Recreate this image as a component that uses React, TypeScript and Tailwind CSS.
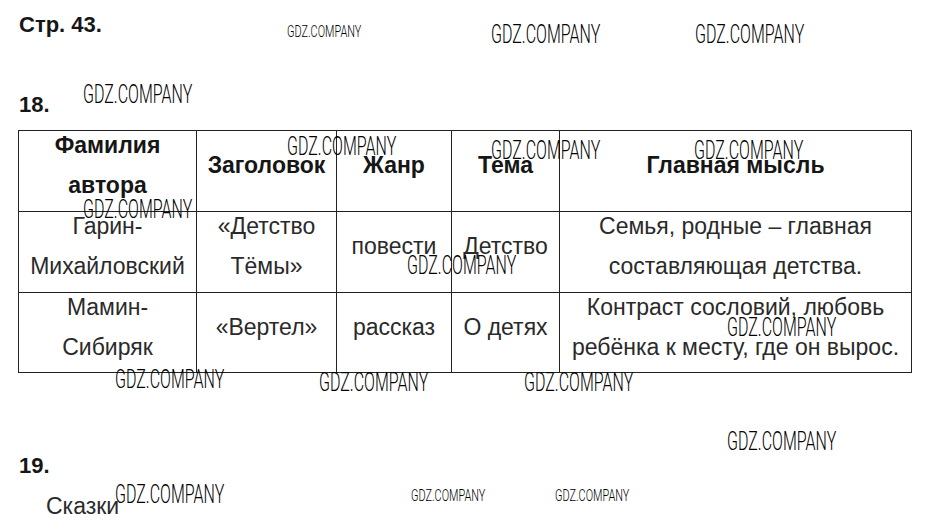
import React from "react";

const marks: { x: number; y: number; small?: boolean }[] = [
  { x: 287, y: 25, small: true },
  { x: 491, y: 25 },
  { x: 695, y: 25 },
  { x: 83, y: 85 },
  { x: 287, y: 137 },
  { x: 491, y: 141 },
  { x: 694, y: 141 },
  { x: 83, y: 200 },
  { x: 407, y: 256 },
  { x: 727, y: 318 },
  { x: 115, y: 370 },
  { x: 319, y: 373 },
  { x: 524, y: 373 },
  { x: 727, y: 432 },
  { x: 115, y: 485 },
  { x: 411, y: 489, small: true },
  { x: 555, y: 489, small: true },
];

function Wm({ x, y, small }: { x: number; y: number; small?: boolean }) {
  return (
    <span
      className={
        small
          ? "absolute whitespace-nowrap origin-top-left scale-x-[0.64] text-[17px] leading-[17px] font-light text-black font-['Roboto',sans-serif]"
          : "absolute whitespace-nowrap origin-top-left scale-x-[0.64] text-[25px] leading-[25px] font-light text-black font-['Roboto',sans-serif]"
      }
      style={{ left: x, top: y - (small ? 2 : 3) }}
    >
      GDZ.COMPANY
    </span>
  );
}

const th = "border border-[#222] p-0 text-center align-middle font-bold text-[23px] text-[#161616]";
const td = "border border-[#222] p-0 text-center align-middle text-[23px] text-[#2a2a2a]";

function C({ children }: { children: React.ReactNode }) {
  return <div className="-mt-[12px] leading-[40px]">{children}</div>;
}

export default function App() {
  return (
    <div className="relative w-[926px] h-[529px] bg-white overflow-hidden font-['Liberation_Sans',Arial,sans-serif]">
      <div className="pl-[19px] pt-[13px] text-[22px] leading-[24px] font-bold text-[#161616]">Стр. 43.</div>
      <div className="pl-[19px] mt-[56px] text-[22px] leading-[24px] font-bold text-[#161616]">18.</div>
      <table className="ml-[18px] mt-[13px] border-collapse table-fixed w-[894px]">
        <colgroup>
          <col className="w-[178px]" />
          <col className="w-[140px]" />
          <col className="w-[115px]" />
          <col className="w-[108px]" />
          <col />
        </colgroup>
        <tbody>
          <tr className="h-[81px]">
            <td className={th}><C>Фамилия<br />автора</C></td>
            <td className={th}><C>Заголовок</C></td>
            <td className={th}><C>Жанр</C></td>
            <td className={th}><C>Тема</C></td>
            <td className={th}><C>Главная мысль</C></td>
          </tr>
          <tr className="h-[81px]">
            <td className={td}><C>Гарин-<br />Михайловский</C></td>
            <td className={td}><C>«Детство<br />Тёмы»</C></td>
            <td className={td}><C>повести</C></td>
            <td className={td}><C>Детство</C></td>
            <td className={td}><C>Семья, родные – главная<br />составляющая детства.</C></td>
          </tr>
          <tr className="h-[80px]">
            <td className={td}><C>Мамин-<br />Сибиряк</C></td>
            <td className={td}><C>«Вертел»</C></td>
            <td className={td}><C>рассказ</C></td>
            <td className={td}><C>О детях</C></td>
            <td className={td}><C>Контраст сословий, любовь<br />ребёнка к месту, где он вырос.</C></td>
          </tr>
        </tbody>
      </table>
      <div className="pl-[19px] mt-[81px] text-[22px] leading-[24px] font-bold text-[#161616]">19.</div>
      <div className="pl-[46px] mt-[16px] text-[23px] leading-[24px] text-[#2a2a2a]">Сказки</div>
      {marks.map((m, i) => (
        <Wm key={i} {...m} />
      ))}
    </div>
  );
}
